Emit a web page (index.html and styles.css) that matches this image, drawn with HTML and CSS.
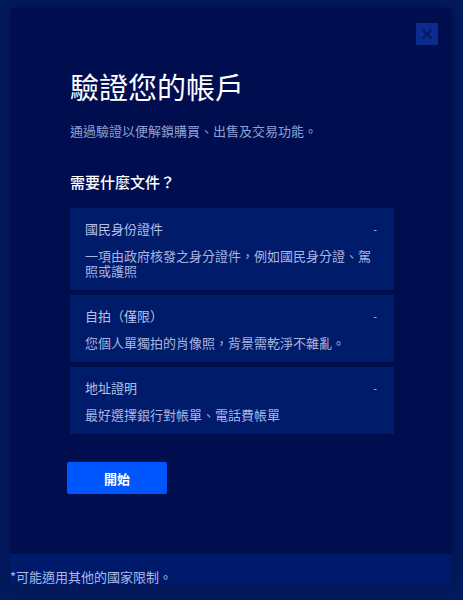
FILE: index.html
```html
<!DOCTYPE html>
<html lang="zh-Hant">
<head>
<meta charset="utf-8">
<title>驗證您的帳戶</title>
<link rel="stylesheet" href="styles.css">
</head>
<body>
<div class="modal">
  <div class="modal-top">
    <button class="close" aria-label="關閉">
      <svg width="10" height="10" viewBox="0 0 10 10"><path d="M1.5 1.5 L8.5 8.5 M8.5 1.5 L1.5 8.5" stroke="#071a66" stroke-width="2.4" stroke-linecap="square"/></svg>
    </button>
  </div>
  <div class="content">
    <h1 class="title">驗證您的帳戶</h1>
    <p class="subtitle">通過驗證以便解鎖購買、出售及交易功能。</p>
    <h2 class="heading">需要什麼文件？</h2>
    <div class="cards">
      <div class="card">
        <div class="card-head"><span>國民身份證件</span><span class="dash">-</span></div>
        <p class="card-desc">一項由政府核發之身分證件，例如國民身分證、駕照或護照</p>
      </div>
      <div class="card">
        <div class="card-head"><span>自拍（僅限）</span><span class="dash">-</span></div>
        <p class="card-desc">您個人單獨拍的肖像照，背景需乾淨不雜亂。</p>
      </div>
      <div class="card">
        <div class="card-head"><span>地址證明</span><span class="dash">-</span></div>
        <p class="card-desc">最好選擇銀行對帳單、電話費帳單</p>
      </div>
    </div>
    <button class="start">開始</button>
  </div>
  <div class="footer">*可能適用其他的國家限制。</div>
</div>
</body>
</html>
```
FILE: styles.css
```css
html, body {
  margin: 0;
  padding: 0;
}
body {
  background: #021b5f;
  font-family: "Noto Sans CJK TC", "Noto Sans", sans-serif;
  height: 600px;
  overflow: hidden;
}
.modal {
  margin: 8px 11px 0 10px;
  width: 442px;
  background: #000e4f;
  box-shadow: 0 0 12px rgba(0, 8, 50, 0.6);
}
.modal-top {
  display: flex;
  justify-content: flex-end;
  padding: 15px 14px 0 0;
}
.close {
  width: 22px;
  height: 22px;
  padding: 0;
  border: none;
  background: #0c2b8e;
  display: flex;
  align-items: center;
  justify-content: center;
}
.content {
  padding: 0 0 60px 60px;
}
.title {
  margin: 23px 0 0;
  font-size: 29px;
  line-height: 36px;
  font-weight: 400;
  color: #ffffff;
}
.subtitle {
  margin: 18px 0 0;
  font-size: 13px;
  line-height: 18px;
  color: #8fa1d8;
}
.heading {
  margin: 32px 0 0;
  font-size: 15px;
  line-height: 20px;
  font-weight: 500;
  color: #ffffff;
}
.cards {
  margin-top: 16px;
  width: 324px;
  display: flex;
  flex-direction: column;
  gap: 5px;
}
.card {
  background: #001b69;
  padding: 12px 15px;
}
.card-head {
  display: flex;
  justify-content: space-between;
  font-size: 13px;
  line-height: 18px;
  color: #b5c0e8;
}
.dash {
  font-size: 11px;
  margin-right: 2px;
}
.card-desc {
  margin: 10px 0 0;
  font-size: 13px;
  line-height: 15px;
  color: #a8b5e2;
}
.start {
  margin: 28px 0 0 -3px;
  width: 100px;
  height: 32px;
  border: none;
  border-radius: 2px;
  background: #0057ff;
  color: #ffffff;
  font-family: inherit;
  font-size: 13px;
  font-weight: 700;
}
.footer {
  background: #001a6b;
  padding-top: 14px;
  font-size: 13px;
  line-height: 17px;
  color: #aebae6;
}
```
